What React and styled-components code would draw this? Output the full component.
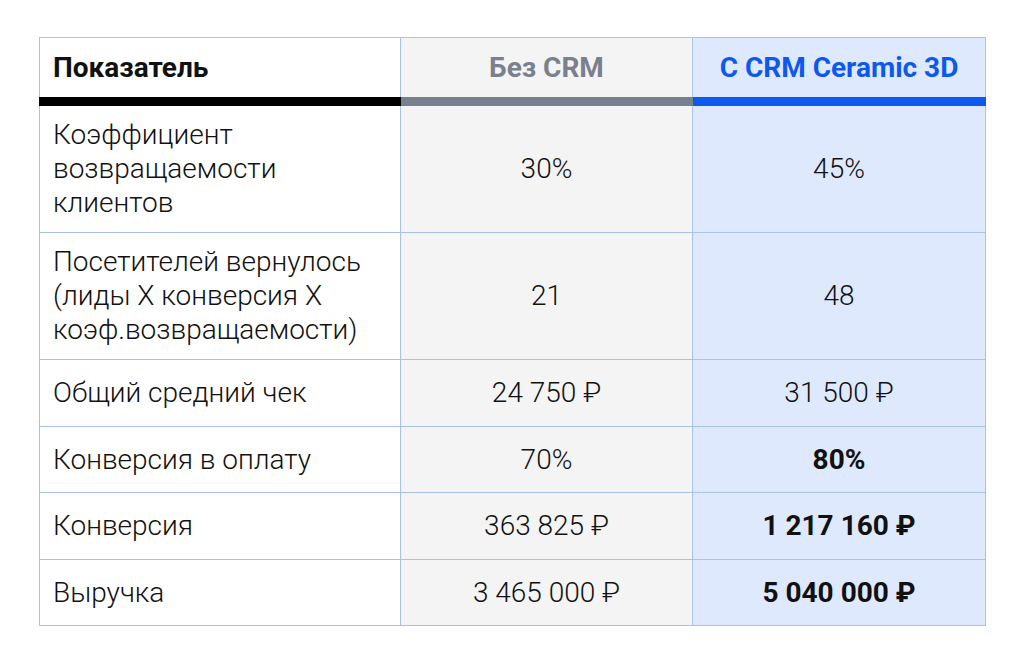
import React from "react";
import styled, { createGlobalStyle } from "styled-components";

const Global = createGlobalStyle`
  body {
    margin: 0;
    background: #fff;
    font-family: Roboto, "Liberation Sans", sans-serif;
    color: #111;
  }
`;

const Page = styled.div`
  padding: 37px 0 0 39px;
`;

const Table = styled.table`
  border-collapse: collapse;
  table-layout: fixed;
  width: 946px;
  font-size: 28px;
  line-height: 34px;
`;

const tones = {
  label: { bg: "#ffffff", bar: "#000000", head: "#111111" },
  base: { bg: "#f4f4f4", bar: "#787f8d", head: "#7a808d" },
  crm: { bg: "#dfe9fd", bar: "#0d58ee", head: "#0d58ee" },
};

const Head = styled.th`
  height: 59px;
  padding: 0 13px;
  border: 1px solid #a8c2ec;
  border-bottom: 9px solid ${(p) => tones[p.$tone].bar};
  background: ${(p) => tones[p.$tone].bg};
  color: ${(p) => tones[p.$tone].head};
  font-weight: 700;
  text-align: ${(p) => (p.$tone === "label" ? "left" : "center")};
  vertical-align: middle;
`;

const Cell = styled.td`
  height: ${(p) => p.$h}px;
  box-sizing: border-box;
  padding: 12px 13px;
  border: 1px solid #a8c2ec;
  background: ${(p) => tones[p.$tone].bg};
  font-weight: ${(p) => (p.$strong ? 700 : 300)};
  text-align: ${(p) => (p.$tone === "label" ? "left" : "center")};
  vertical-align: middle;
`;

const rows = [
  { label: ["Коэффициент", "возвращаемости", "клиентов"], base: "30%", crm: "45%", h: 126 },
  { label: ["Посетителей вернулось", "(лиды Х конверсия Х", "коэф.возвращаемости)"], base: "21", crm: "48", h: 126 },
  { label: ["Общий средний чек"], base: "24 750 ₽", crm: "31 500 ₽", h: 67 },
  { label: ["Конверсия в оплату"], base: "70%", crm: "80%", strong: true, h: 66 },
  { label: ["Конверсия"], base: "363 825 ₽", crm: "1 217 160 ₽", strong: true, h: 67 },
  { label: ["Выручка"], base: "3 465 000 ₽", crm: "5 040 000 ₽", strong: true, h: 66 },
];

export default function App() {
  return (
    <Page>
      <Global />
      <Table>
        <colgroup>
          <col style={{ width: 361 }} />
          <col style={{ width: 292 }} />
          <col style={{ width: 293 }} />
        </colgroup>
        <thead>
          <tr>
            <Head $tone="label">Показатель</Head>
            <Head $tone="base">Без CRM</Head>
            <Head $tone="crm">С CRM Ceramic 3D</Head>
          </tr>
        </thead>
        <tbody>
          {rows.map((r) => (
            <tr key={r.label[0]}>
              <Cell $tone="label" $h={r.h}>
                {r.label.map((line, i) => (
                  <React.Fragment key={i}>
                    {i > 0 && <br />}
                    {line}
                  </React.Fragment>
                ))}
              </Cell>
              <Cell $tone="base" $h={r.h}>{r.base}</Cell>
              <Cell $tone="crm" $h={r.h} $strong={r.strong}>{r.crm}</Cell>
            </tr>
          ))}
        </tbody>
      </Table>
    </Page>
  );
}
